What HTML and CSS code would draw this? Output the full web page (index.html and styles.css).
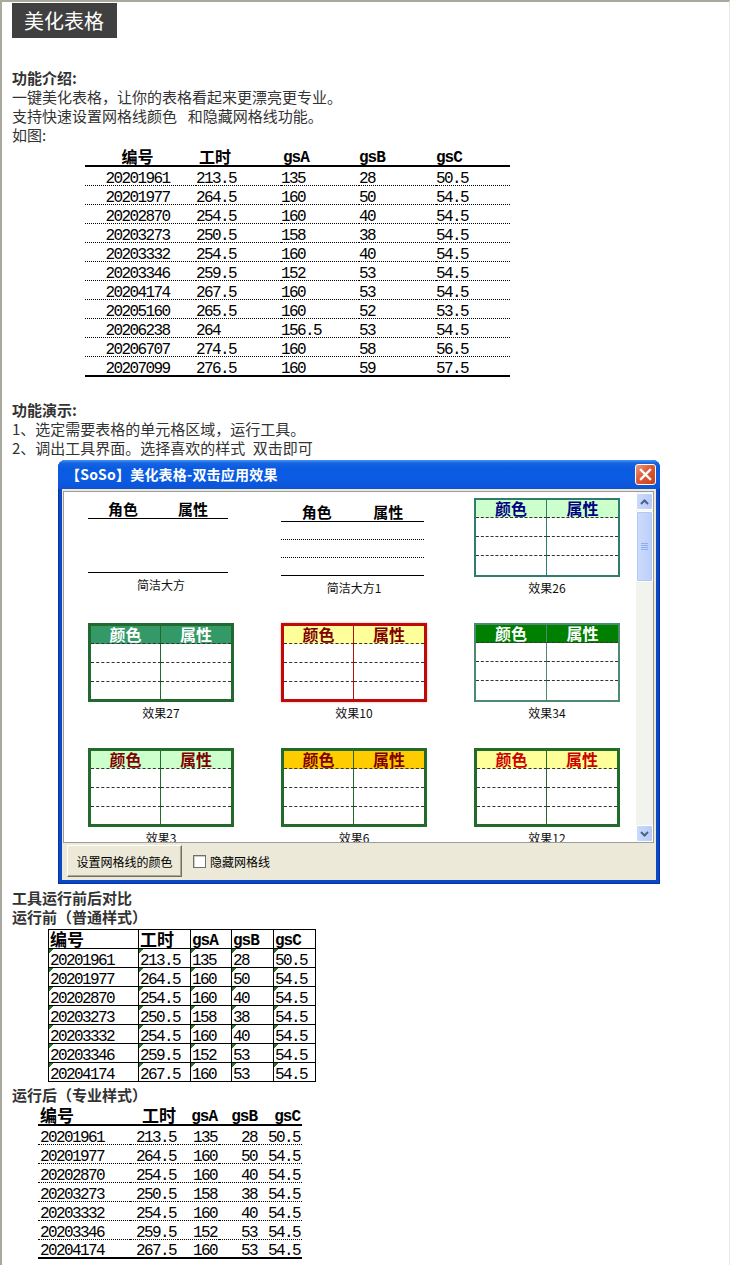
FILE: index.html
```html
<!DOCTYPE html>
<html lang="zh">
<head>
<meta charset="utf-8">
<title>美化表格</title>
<link rel="stylesheet" href="styles.css">
</head>
<body>
<div class="page">
  <div class="title">美化表格</div>

  <div class="intro">
    <p class="h">功能介绍:</p>
    <p>一键美化表格，让你的表格看起来更漂亮更专业。</p>
    <p>支持快速设置网格线颜色&ensp;&nbsp;和隐藏网格线功能。</p>
    <p>如图:</p>
  </div>

  <table class="t1">
    <colgroup><col class="w1"><col class="w2"><col class="w3"><col class="w4"><col class="w5"></colgroup>
    <thead>
      <tr><th class="cn">编号</th><th class="cn">工时</th><th class="en">gsA</th><th class="en">gsB</th><th class="en">gsC</th></tr>
    </thead>
    <tbody>
      <tr><td>20201961</td><td>213.5</td><td>135</td><td>28</td><td>50.5</td></tr>
      <tr><td>20201977</td><td>264.5</td><td>160</td><td>50</td><td>54.5</td></tr>
      <tr><td>20202870</td><td>254.5</td><td>160</td><td>40</td><td>54.5</td></tr>
      <tr><td>20203273</td><td>250.5</td><td>158</td><td>38</td><td>54.5</td></tr>
      <tr><td>20203332</td><td>254.5</td><td>160</td><td>40</td><td>54.5</td></tr>
      <tr><td>20203346</td><td>259.5</td><td>152</td><td>53</td><td>54.5</td></tr>
      <tr><td>20204174</td><td>267.5</td><td>160</td><td>53</td><td>54.5</td></tr>
      <tr><td>20205160</td><td>265.5</td><td>160</td><td>52</td><td>53.5</td></tr>
      <tr><td>20206238</td><td>264</td><td>156.5</td><td>53</td><td>54.5</td></tr>
      <tr><td>20206707</td><td>274.5</td><td>160</td><td>58</td><td>56.5</td></tr>
      <tr><td>20207099</td><td>276.5</td><td>160</td><td>59</td><td>57.5</td></tr>
    </tbody>
  </table>

  <div class="demo">
    <p class="h">功能演示:</p>
    <p>1、选定需要表格的单元格区域，运行工具。</p>
    <p>2、调出工具界面。选择喜欢的样式&ensp;双击即可</p>
  </div>

  <div class="dlg">
    <div class="dlg-title">
      <span>【SoSo】美化表格-双击应用效果</span>
      <span class="dlg-close"><svg width="13" height="13" viewBox="0 0 13 13"><path d="M2 2L11 11M11 2L2 11" stroke="#fff" stroke-width="2.4" stroke-linecap="square"/></svg></span>
    </div>
    <div class="dlg-body">
      <div class="list">
        <div class="gallery">
          <figure class="item">
            <div class="plain p1">
              <div class="ph"><span>角色</span><span>属性</span></div>
            </div>
            <figcaption>简洁大方</figcaption>
          </figure>
          <figure class="item">
            <div class="plain p2">
              <div class="ph"><span>角色</span><span>属性</span></div>
              <div class="pr"></div><div class="pr"></div><div class="pr"></div>
            </div>
            <figcaption>简洁大方1</figcaption>
          </figure>
          <figure class="item">
            <div class="mt s26"><div class="hd">颜色</div><div class="hd">属性</div><div></div><div></div><div></div><div></div><div></div><div></div></div>
            <figcaption>效果26</figcaption>
          </figure>
          <figure class="item">
            <div class="mt s27"><div class="hd">颜色</div><div class="hd">属性</div><div></div><div></div><div></div><div></div><div></div><div></div></div>
            <figcaption>效果27</figcaption>
          </figure>
          <figure class="item">
            <div class="mt s10"><div class="hd">颜色</div><div class="hd">属性</div><div></div><div></div><div></div><div></div><div></div><div></div></div>
            <figcaption>效果10</figcaption>
          </figure>
          <figure class="item">
            <div class="mt s34"><div class="hd">颜色</div><div class="hd">属性</div><div></div><div></div><div></div><div></div><div></div><div></div></div>
            <figcaption>效果34</figcaption>
          </figure>
          <figure class="item">
            <div class="mt s3"><div class="hd">颜色</div><div class="hd">属性</div><div></div><div></div><div></div><div></div><div></div><div></div></div>
            <figcaption>效果3</figcaption>
          </figure>
          <figure class="item">
            <div class="mt s6"><div class="hd">颜色</div><div class="hd">属性</div><div></div><div></div><div></div><div></div><div></div><div></div></div>
            <figcaption>效果6</figcaption>
          </figure>
          <figure class="item">
            <div class="mt s12"><div class="hd">颜色</div><div class="hd">属性</div><div></div><div></div><div></div><div></div><div></div><div></div></div>
            <figcaption>效果12</figcaption>
          </figure>
        </div>
        <div class="scroll">
          <div class="sb-btn"><svg width="9" height="6" viewBox="0 0 9 6"><path d="M1 5L4.5 1.5L8 5" fill="none" stroke="#4d6185" stroke-width="2"/></svg></div>
          <div class="sb-thumb"><svg width="7" height="8" viewBox="0 0 7 8"><path d="M0 .5H7M0 2.5H7M0 4.5H7M0 6.5H7" stroke="#8eaef0" stroke-width="1"/></svg></div>
          <div class="sb-track"></div>
          <div class="sb-btn"><svg width="9" height="6" viewBox="0 0 9 6"><path d="M1 1L4.5 4.5L8 1" fill="none" stroke="#4d6185" stroke-width="2"/></svg></div>
        </div>
      </div>
      <div class="foot">
        <button class="btn" type="button">设置网格线的颜色</button>
        <label class="chk"><span class="box"></span>隐藏网格线</label>
      </div>
    </div>
  </div>

  <p class="h gap4">工具运行前后对比</p>
  <p class="h">运行前（普通样式）</p>

  <table class="t2">
    <colgroup><col class="v1"><col class="v2"><col class="v3"><col class="v4"><col class="v5"></colgroup>
    <thead>
      <tr><th class="cn">编号</th><th class="cn">工时</th><th class="en">gsA</th><th class="en">gsB</th><th class="en">gsC</th></tr>
    </thead>
    <tbody>
      <tr><td>20201961</td><td>213.5</td><td>135</td><td>28</td><td>50.5</td></tr>
      <tr><td>20201977</td><td>264.5</td><td>160</td><td>50</td><td>54.5</td></tr>
      <tr><td>20202870</td><td>254.5</td><td>160</td><td>40</td><td>54.5</td></tr>
      <tr><td>20203273</td><td>250.5</td><td>158</td><td>38</td><td>54.5</td></tr>
      <tr><td>20203332</td><td>254.5</td><td>160</td><td>40</td><td>54.5</td></tr>
      <tr><td>20203346</td><td>259.5</td><td>152</td><td>53</td><td>54.5</td></tr>
      <tr><td>20204174</td><td>267.5</td><td>160</td><td>53</td><td>54.5</td></tr>
    </tbody>
  </table>

  <p class="h gap3">运行后（专业样式）</p>

  <table class="t3">
    <colgroup><col class="u1"><col class="u2"><col class="u3"><col class="u4"><col class="u5"></colgroup>
    <thead>
      <tr><th class="cn">编号</th><th class="cn">工时</th><th class="en">gsA</th><th class="en">gsB</th><th class="en">gsC</th></tr>
    </thead>
    <tbody>
      <tr><td>20201961</td><td>213.5</td><td>135</td><td>28</td><td>50.5</td></tr>
      <tr><td>20201977</td><td>264.5</td><td>160</td><td>50</td><td>54.5</td></tr>
      <tr><td>20202870</td><td>254.5</td><td>160</td><td>40</td><td>54.5</td></tr>
      <tr><td>20203273</td><td>250.5</td><td>158</td><td>38</td><td>54.5</td></tr>
      <tr><td>20203332</td><td>254.5</td><td>160</td><td>40</td><td>54.5</td></tr>
      <tr><td>20203346</td><td>259.5</td><td>152</td><td>53</td><td>54.5</td></tr>
      <tr><td>20204174</td><td>267.5</td><td>160</td><td>53</td><td>54.5</td></tr>
    </tbody>
  </table>
</div>
</body>
</html>
```

FILE: styles.css
```css
* { box-sizing: border-box; }
html, body { margin: 0; background: #fff; }
body {
  font-family: "Noto Sans CJK SC", "Noto Sans", sans-serif;
  color: #333;
}
.page {
  min-height: 100vh;
  border-top: 2px solid #a9a99d;
  border-left: 2px solid #a9a99d;
  border-right: 1px solid #e8e8e2;
  padding: 1px 0 4px 10px;
  font-size: 15px;
  line-height: 19px;
}
p { margin: 0; }
.h { font-weight: 700; }

.title {
  width: fit-content;
  height: 35px;
  line-height: 35px;
  padding: 0 13px 0 12px;
  background: #404040;
  color: #fff;
  font-size: 20px;
}
.intro { margin-top: 30px; }
.demo { margin-top: 23px; }
.gap4 { margin-top: 4px; }
.gap3 { margin-top: 3px; }

/* shared table text */
table { color: #000; }
td {
  font-family: "Liberation Mono", "DejaVu Sans Mono", monospace;
  font-size: 16px;
  letter-spacing: -1.6px;
}
th.cn { font-weight: 700; font-size: 16px; }
th.en {
  font-family: "Liberation Mono", "DejaVu Sans Mono", monospace;
  font-weight: 700;
  font-size: 16px;
  letter-spacing: -1px;
}

/* table 1 */
.t1 {
  margin: 3px 0 0 73px;
  width: 425px;
  border-collapse: separate;
  border-spacing: 0;
  table-layout: fixed;
}
.t1 .w1 { width: 111px; }
.t1 .w2 { width: 85px; }
.t1 .w3 { width: 78px; }
.t1 .w4 { width: 77px; }
.t1 .w5 { width: 74px; }
.t1 th, .t1 td {
  padding: 0;
  text-align: left;
  vertical-align: bottom;
  white-space: nowrap;
}
.t1 th { height: 20px; line-height: 17px; border-bottom: 2px solid #000; }
.t1 th.en { line-height: 14px; }
.t1 th:nth-child(2) { padding-left: 3px; }
.t1 th:nth-child(3) { padding-left: 2px; }
.t1 td { height: 19px; line-height: 12px; border-bottom: 1px dotted #000; }
.t1 tbody tr:last-child td { height: 20px; border-bottom: 2px solid #000; }
.t1 th:first-child, .t1 td:first-child { text-align: center; padding-right: 6px; }

/* dialog */
.dlg {
  margin: 3px 0 0 46px;
  width: 602px;
  height: 424px;
  padding: 0 4px 4px;
  background: #0b47c9;
  border-radius: 8px 8px 0 0;
  display: flex;
  flex-direction: column;
  box-shadow: inset 0 0 0 1px #07339e;
}
.dlg-title {
  height: 29px;
  margin: 0 -4px;
  padding: 0 4px 0 8px;
  border-radius: 7px 7px 0 0;
  background: linear-gradient(#4a94f4 0, #1466e4 3px, #0a5be0 8px, #0b5ce4 18px, #0d53d6 29px);
  display: flex;
  align-items: center;
  justify-content: space-between;
  color: #fff;
  font-weight: 700;
  font-size: 14px;
  letter-spacing: 0.2px;
}
.dlg-close {
  width: 21px;
  height: 21px;
  border: 1px solid #fff;
  border-radius: 3px;
  background: linear-gradient(135deg, #ee9a7c 0, #dd5a36 45%, #c8401c 100%);
  display: flex;
  align-items: center;
  justify-content: center;
}
.dlg-body {
  flex: 1;
  background: #ece9d8;
  display: flex;
  flex-direction: column;
}
.list {
  margin: 2px 2px 0 1px;
  height: 352px;
  border: 1px solid #9d9d9d;
  background: #fff;
  display: flex;
}
.gallery {
  flex: 1;
  overflow: hidden;
  display: grid;
  grid-template-columns: repeat(3, 146px);
  column-gap: 47px;
  row-gap: 27px;
  align-content: start;
  padding: 6px 0 0 24px;
}
.item { margin: 0; width: 146px; }
.item figcaption {
  margin-top: 3px;
  text-align: center;
  font-size: 12px;
  line-height: 16px;
  color: #111;
}

/* plain styles */
.plain { color: #000; font-weight: 700; font-size: 15px; height: 79px; }
.ph { display: flex; align-items: flex-end; border-bottom: 1px solid #000; }
.ph span { flex: 1; text-align: center; line-height: 18px; }
.p1 { width: 140px; height: 75px; margin-bottom: 4px; border-bottom: 1px solid #000; }
.p1 .ph { height: 21px; }
.p2 { width: 143px; }
.p2 .ph { height: 24px; }
.p2 .pr { height: 18px; border-bottom: 1px dotted #000; }
.p2 .pr:last-child { border-bottom: 1px solid #000; }

/* coloured mini tables */
.mt {
  width: 146px;
  height: 79px;
  border: 3px solid var(--bc);
  display: grid;
  grid-template-columns: 1fr 1fr;
  grid-template-rows: 18px 19px 19px 1fr;
  background: #fff;
}
.mt > div { border-bottom: 1px dashed #333; }
.mt > div:nth-child(odd) { border-right: 1px solid var(--bc); }
.mt > div:nth-last-child(-n+2) { border-bottom: 0; }
.mt .hd {
  background: var(--hb);
  color: var(--hc);
  font-weight: 700;
  font-size: 16px;
  line-height: 17px;
  text-align: center;
}
.s26 { --bc: #2f7d6e; --hb: #ccffcc; --hc: #000080; border-width: 2px; }
.s27 { --bc: #21692f; --hb: #339966; --hc: #fff; }
.s10 { --bc: #bf0a0a; --hb: #ffff99; --hc: #800000; box-shadow: 0 0 2px #f4a0a0; }
.s34 { --bc: #4d8a70; --hb: #008000; --hc: #fff; border-width: 2px; }
.s3  { --bc: #226b2a; --hb: #ccffcc; --hc: #800000; }
.s6  { --bc: #226b2a; --hb: #ffcc00; --hc: #800000; }
.s12 { --bc: #226b2a; --hb: #ffff99; --hc: #cc0000; }

/* scrollbar */
.scroll {
  width: 17px;
  background: #f3f3ee;
  display: flex;
  flex-direction: column;
  padding-top: 1px;
}
.sb-btn {
  height: 17px;
  border: 1px solid #fff;
  border-radius: 2px;
  background: linear-gradient(90deg, #cadafc, #b7cbf8);
  display: flex;
  align-items: center;
  justify-content: center;
}
.sb-thumb {
  height: 71px;
  margin-top: 1px;
  border: 1px solid #fff;
  border-radius: 2px;
  background: linear-gradient(90deg, #cddcfc, #bccffa);
  box-shadow: inset 0 0 0 1px #b3c7f5;
  display: flex;
  align-items: center;
  justify-content: center;
}
.sb-track { flex: 1; }

/* footer */
.foot {
  flex: 1;
  display: flex;
  align-items: center;
  padding: 1px 0 2px 5px;
  font-size: 12px;
  color: #000;
}
.btn {
  width: 115px;
  height: 32px;
  padding: 0;
  font-family: "Noto Sans CJK SC", sans-serif;
  font-size: 12px;
  color: #000;
  background: #ece9d8;
  border: 1px solid;
  border-color: #fff #716f64 #716f64 #fff;
  box-shadow: inset -1px -1px 0 #aca899;
}
.chk { display: flex; align-items: center; margin-left: 11px; }
.box {
  width: 13px;
  height: 13px;
  margin-right: 4px;
  background: #fff;
  border: 1px solid #6f6f6f;
  box-shadow: inset 1px 1px 0 #c9c9c9;
}

/* table 2: before */
.t2 {
  margin: 3px 0 0 36px;
  width: 268px;
  border-collapse: separate;
  border-spacing: 0;
  table-layout: fixed;
  border-top: 1px solid #000;
  border-left: 1px solid #000;
}
.t2 .v1 { width: 90px; }
.t2 .v2 { width: 52px; }
.t2 .v3 { width: 41px; }
.t2 .v4 { width: 42px; }
.t2 .v5 { width: 42px; }
.t2 th, .t2 td {
  height: 19px;
  padding: 0 0 0 1px;
  border-right: 1px solid #000;
  border-bottom: 1px solid #000;
  text-align: left;
  vertical-align: bottom;
  line-height: 12px;
  white-space: nowrap;
}
.t2 th.cn { font-size: 17px; line-height: 18px; }
.t2 th.en { line-height: 14px; }
.t2 td {
  background: linear-gradient(135deg, #267a26 0 3px, transparent 3px) no-repeat 0 0 / 6px 6px;
}

/* table 3: after */
.t3 {
  margin: 0 0 0 26px;
  width: 264px;
  border-collapse: separate;
  border-spacing: 0;
  table-layout: fixed;
}
.t3 .u1 { width: 92px; }
.t3 .u2 { width: 48px; }
.t3 .u3 { width: 41px; }
.t3 .u4 { width: 40px; }
.t3 .u5 { width: 43px; }
.t3 th, .t3 td {
  padding: 0 2px;
  text-align: right;
  vertical-align: bottom;
  white-space: nowrap;
}
.t3 th:first-child, .t3 td:first-child { text-align: left; }
.t3 th { height: 22px; line-height: 18px; border-bottom: 2px solid #000; }
.t3 th.cn { font-size: 17px; }
.t3 th.en { line-height: 14px; }
.t3 td { height: 19px; line-height: 12px; border-bottom: 1px dotted #000; }
.t3 tbody tr:last-child td { border-bottom: 2px solid #000; }
```
